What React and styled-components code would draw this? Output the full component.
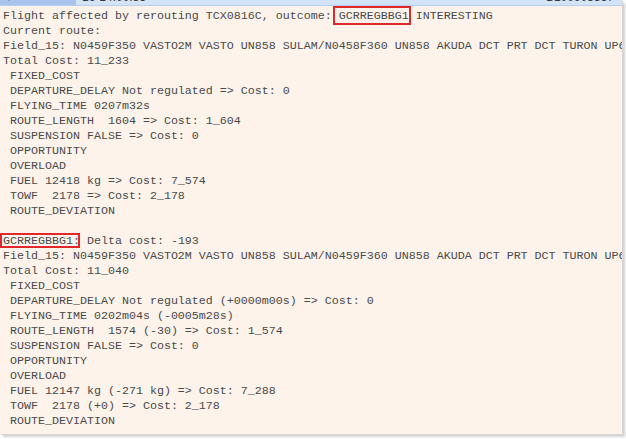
import React from "react";
import styled, { createGlobalStyle } from "styled-components";

const Global = createGlobalStyle`
  html, body {
    margin: 0;
    padding: 0;
    background: #ffffff;
  }
`;

const Page = styled.div`
  width: 626px;
  height: 439px;
  overflow: hidden;
  background: #ffffff;
`;

const Window = styled.div`
  width: 622px;
  height: 434px;
  display: flex;
  flex-direction: column;
  overflow: hidden;
  background: #fdf3ea;
  box-shadow: 1px 1px 0 #d6d6d6, 3px 3px 2px rgba(0, 0, 0, 0.18);
`;

const HeaderStrip = styled.div`
  height: 5px;
  flex: none;
  display: flex;
  overflow: hidden;
  background: #d3e3f8;
  border-bottom: 1px solid #b9cfee;
`;

const HeaderCell = styled.div`
  width: ${p => p.w}px;
  flex: ${p => (p.grow ? 1 : "none")};
  background: ${p => p.bg};
  display: flex;
  justify-content: ${p => (p.right ? "flex-end" : "flex-start")};
  padding: 0 ${p => (p.right ? 8 : 4)}px 0 ${p => (p.right ? 0 : 6)}px;
  font-family: "Liberation Sans", Arial, sans-serif;
  font-size: 12px;
  line-height: 12px;
  color: #3a3a3a;
`;

const HeaderText = styled.span`
  margin-top: -9px;
`;

const Log = styled.pre`
  flex: 1;
  margin: 0;
  padding: 3px 0 0 3px;
  font-family: "Liberation Mono", "Courier New", monospace;
  font-size: 11.67px;
  line-height: 15px;
  color: #4a4a4a;
  white-space: pre;
  overflow: hidden;
`;

const Line = styled.div`
  height: 15px;
`;

const Marked = styled.span`
  position: relative;
  &::after {
    content: "";
    position: absolute;
    left: ${p => p.l}px;
    right: ${p => p.r}px;
    top: ${p => p.t}px;
    bottom: ${p => p.b}px;
    border: 2px solid #e2282c;
    pointer-events: none;
  }
`;

const firstBlock = [
  "Current route:",
  "Field_15: N0459F350 VASTO2M VASTO UN858 SULAM/N0458F360 UN858 AKUDA DCT PRT DCT TURON UP687 ARKAN",
  "Total Cost: 11_233",
  " FIXED_COST",
  " DEPARTURE_DELAY Not regulated => Cost: 0",
  " FLYING_TIME 0207m32s",
  " ROUTE_LENGTH  1604 => Cost: 1_604",
  " SUSPENSION FALSE => Cost: 0",
  " OPPORTUNITY",
  " OVERLOAD",
  " FUEL 12418 kg => Cost: 7_574",
  " TOWF  2178 => Cost: 2_178",
  " ROUTE_DEVIATION",
  "",
];

const secondBlock = [
  "Field_15: N0459F350 VASTO2M VASTO UN858 SULAM/N0459F360 UN858 AKUDA DCT PRT DCT TURON UP687 ARKAN",
  "Total Cost: 11_040",
  " FIXED_COST",
  " DEPARTURE_DELAY Not regulated (+0000m00s) => Cost: 0",
  " FLYING_TIME 0202m04s (-0005m28s)",
  " ROUTE_LENGTH  1574 (-30) => Cost: 1_574",
  " SUSPENSION FALSE => Cost: 0",
  " OPPORTUNITY",
  " OVERLOAD",
  " FUEL 12147 kg (-271 kg) => Cost: 7_288",
  " TOWF  2178 (+0) => Cost: 2_178",
  " ROUTE_DEVIATION",
];

export default function App() {
  return (
    <Page>
      <Global />
      <Window>
        <HeaderStrip>
          <HeaderCell w={66} bg="#a9c4ec">
            <HeaderText>▾</HeaderText>
          </HeaderCell>
          <HeaderCell grow bg="#d3e3f8">
            <HeaderText>16-14:00:53</HeaderText>
          </HeaderCell>
          <HeaderCell right w={120} bg="#d3e3f8">
            <HeaderText>B100903337</HeaderText>
          </HeaderCell>
        </HeaderStrip>
        <Log>
          <Line>
            {"Flight affected by rerouting TCX0816C, outcome: "}
            <Marked l={-6} r={-2} t={-3} b={-2}>GCRREGBBG1</Marked>
            {" INTERESTING"}
          </Line>
          {firstBlock.map((text, i) => (
            <Line key={"a" + i}>{text}</Line>
          ))}
          <Line>
            <Marked l={-3} r={-7} t={-1} b={0}>GCRREGBBG1</Marked>
            {": Delta cost: -193"}
          </Line>
          {secondBlock.map((text, i) => (
            <Line key={"b" + i}>{text}</Line>
          ))}
        </Log>
      </Window>
    </Page>
  );
}
